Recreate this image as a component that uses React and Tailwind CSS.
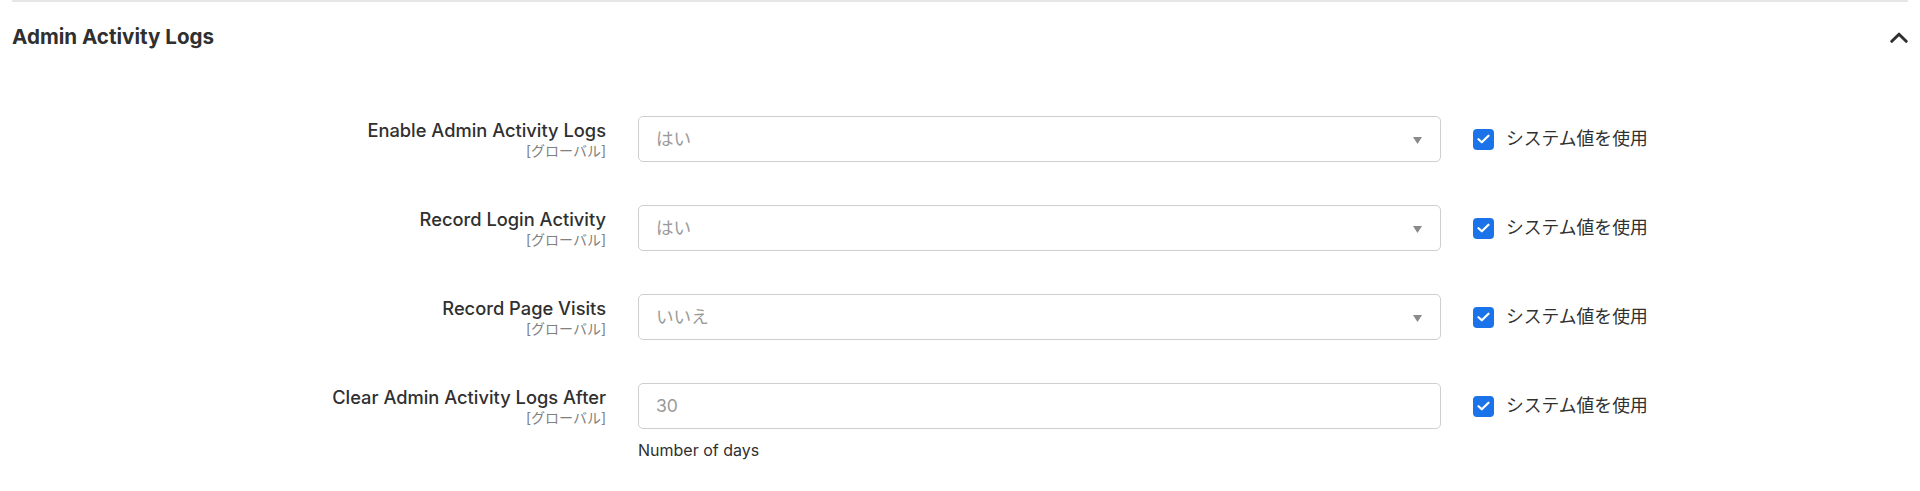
import React from 'react';

const rows = [
    { label: 'Enable Admin Activity Logs', value: 'はい', type: 'select' },
    { label: 'Record Login Activity', value: 'はい', type: 'select' },
    { label: 'Record Page Visits', value: 'いいえ', type: 'select' },
    { label: 'Clear Admin Activity Logs After', value: '30', type: 'input', note: 'Number of days' },
];

function Checkbox() {
    return (
        <span className="flex h-[21px] w-[21px] items-center justify-center rounded-[4px] bg-[#1a73e8]">
            <svg width="13" height="10" viewBox="0 0 13 10" fill="none">
                <path d="M1.5 5.2 4.8 8.3 11.5 1.7" stroke="white" strokeWidth="2.2" strokeLinecap="round" strokeLinejoin="round" />
            </svg>
        </span>
    );
}

function Field({ row }) {
    return (
        <div className="relative flex h-[46px] w-[803px] items-center rounded-[5px] border border-[#cfcfcf] bg-white pl-[17px] text-[17.6px] text-[#9a9a9a]">
            {row.value}
            {row.type === 'select' && (
                <svg className="absolute right-[18px] top-[20px]" width="9" height="7" viewBox="0 0 9 7">
                    <path d="M0 0h9L4.5 7z" fill="#8a8a8a" />
                </svg>
            )}
        </div>
    );
}

export default function App() {
    return (
        <div className="min-h-[491px] bg-white text-[#303030]" style={{ fontFamily: 'Inter, "Noto Sans CJK JP", sans-serif' }}>
            <div className="mx-3 border-t-2 border-[#e6e6e6]">

                {/* HEADER */}
                <div className="flex h-[70px] items-center justify-between">
                    <h2 className="text-[20.6px] font-bold text-[#303030]">Admin Activity Logs</h2>
                    <svg width="18" height="11" viewBox="0 0 18 11" fill="none">
                        <path d="M1.8 9.3 9 2.2l7.2 7.1" stroke="#303030" strokeWidth="3" strokeLinecap="round" strokeLinejoin="round" />
                    </svg>
                </div>

                {/* FORM */}
                <div className="pt-[44px]">
                    {rows.map((row) => (
                        <div key={row.label} className="mb-[43px] flex items-start">
                            <div className="w-[594px] pt-[3px] text-right">
                                <div className="text-[18.3px] font-medium leading-[22px]">{row.label}</div>
                                <div className="text-[14px] leading-[20px] text-[#808080]">[グローバル]</div>
                            </div>
                            <div className="ml-8">
                                <Field row={row} />
                                {row.note && <div className="mt-[11px] text-[16px] leading-[20px]">{row.note}</div>}
                            </div>
                            <div className="ml-8 flex h-[46px] items-center gap-3">
                                <Checkbox />
                                <span className="text-[17.8px] text-[#303030]">システム値を使用</span>
                            </div>
                        </div>
                    ))}
                </div>
            </div>
        </div>
    );
}
